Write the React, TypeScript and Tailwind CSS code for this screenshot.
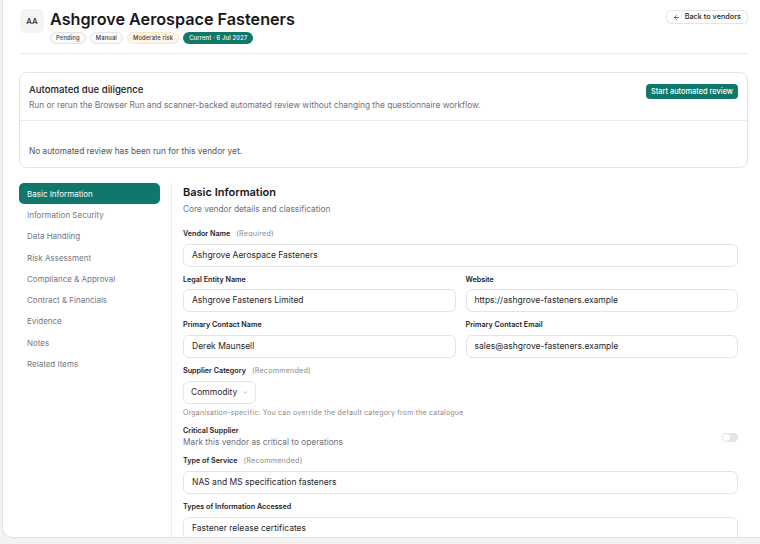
import React from "react";
import { ArrowLeft, ChevronDown } from "lucide-react";

const navItems = [
  "Basic Information",
  "Information Security",
  "Data Handling",
  "Risk Assessment",
  "Compliance & Approval",
  "Contract & Financials",
  "Evidence",
  "Notes",
  "Related Items",
];

function Label({ text, hint }: { text: string; hint?: string }) {
  return (
    <div className="h-[10px] leading-[10px] text-[7.2px] font-semibold text-[#222] flex items-center">
      <span>{text}</span>
      {hint && <span className="ml-[6px] font-normal text-[#8a8a8a] tracking-[0.2px]">{hint}</span>}
    </div>
  );
}

function Input({ value }: { value: string }) {
  return (
    <div className="mt-[4.5px] h-[23px] rounded-[6px] border border-[#e4e4e7] bg-white flex items-center px-[8px] text-[8.5px] text-[#27272a]">
      {value}
    </div>
  );
}

function Field({ label, hint, value }: { label: string; hint?: string; value: string }) {
  return (
    <div>
      <Label text={label} hint={hint} />
      <Input value={value} />
    </div>
  );
}

const badge = "h-[12px] px-[5px] rounded-full text-[5.8px] font-medium flex items-center tracking-[0.15px]";

export default function App() {
  return (
    <div className="h-[544px] w-[760px] overflow-hidden bg-[#f3f3f4] font-['Inter',sans-serif]">
      <div className="ml-[2px] h-[538px] w-[790px] overflow-hidden rounded-bl-[10px] border-l border-b border-[#e2e2e4] bg-white">
        <div className="w-[745px] pl-[16px]">
          {/* Header */}
          <div className="flex justify-between pt-[9px]">
            <div className="flex pl-[1px]">
              <div className="h-[24px] w-[24px] rounded-[6px] bg-[#f4f4f5] flex items-center justify-center text-[8px] font-medium text-[#27272a]">
                AA
              </div>
              <div className="ml-[6px]">
                <div className="h-[20px] leading-[20px] text-[16.2px] font-semibold text-[#18181b]">
                  Ashgrove Aerospace Fasteners
                </div>
                <div className="mt-[3px] flex gap-[4px]">
                  <span className={badge + " border border-[#e4e4e7] bg-[#fafafa] text-[#3f3f46]"}>Pending</span>
                  <span className={badge + " border border-[#e4e4e7] bg-[#fafafa] text-[#3f3f46]"}>Manual</span>
                  <span className={badge + " border border-[#fbe7c6] bg-[#fdf6e8] text-[#4a3b1c]"}>Moderate risk</span>
                  <span className={badge + " bg-[#10776b] text-white px-[6px]"}>Current · 6 Jul 2027</span>
                </div>
              </div>
            </div>
            <div className="mt-[1px] h-[14px] px-[6px] rounded-[5px] border border-[#e4e4e7] bg-white flex items-center gap-[5px] text-[7.3px] font-medium text-[#27272a]">
              <ArrowLeft size={7} strokeWidth={2.2} />
              <span>Back to vendors</span>
            </div>
          </div>
          <div className="mt-[9px] ml-[1px] border-t border-[#ececee]" />

          {/* Automated due diligence */}
          <div className="mt-[18px] rounded-[8px] border border-[#e4e4e7] bg-white">
            <div className="flex justify-between px-[9px] pt-[10px] pb-[9px] border-b border-[#ececee]">
              <div>
                <div className="h-[14px] leading-[14px] text-[9.6px] font-medium text-[#18181b]">
                  Automated due diligence
                </div>
                <div className="mt-[2px] h-[12px] leading-[12px] text-[8.3px] text-[#71717a]">
                  Run or rerun the Browser Run and scanner-backed automated review without changing the questionnaire workflow.
                </div>
              </div>
              <div className="mt-[1px] h-[15px] px-[5px] rounded-[4px] bg-[#10776b] flex items-center text-[7.4px] font-medium text-white">
                Start automated review
              </div>
            </div>
            <div className="px-[9px] pt-[24px] pb-[10px] h-[12px] box-content leading-[12px] text-[8.3px] text-[#52525b]">
              No automated review has been run for this vendor yet.
            </div>
          </div>

          {/* Main */}
          <div className="mt-[15px] flex">
            <div className="w-[153px] shrink-0 border-r border-[#ececee] pr-[11px] h-[400px]">
              {navItems.map((item, i) => (
                <div
                  key={item}
                  className={
                    i === 0
                      ? "h-[21.3px] rounded-[5px] bg-[#10776b] text-white px-[8px] flex items-center text-[8px]"
                      : "h-[21.3px] px-[8px] flex items-center text-[8px] text-[#767680]"
                  }
                >
                  {item}
                </div>
              ))}
            </div>
            <div className="flex-1 pl-[11px] pr-[10px] pt-[1px]">
              <div className="h-[16px] leading-[16px] text-[11px] font-semibold text-[#18181b]">
                Basic Information
              </div>
              <div className="mt-[3px] h-[12px] leading-[12px] text-[8.3px] text-[#71717a]">
                Core vendor details and classification
              </div>

              <div className="mt-[14px] flex flex-col gap-[8.2px]">
                <Field label="Vendor Name" hint="(Required)" value="Ashgrove Aerospace Fasteners" />
                <div className="grid grid-cols-2 gap-x-[10px] gap-y-[8.2px]">
                  <Field label="Legal Entity Name" value="Ashgrove Fasteners Limited" />
                  <Field label="Website" value="https://ashgrove-fasteners.example" />
                  <Field label="Primary Contact Name" value="Derek Maunsell" />
                  <Field label="Primary Contact Email" value="sales@ashgrove-fasteners.example" />
                </div>
                <div>
                  <Label text="Supplier Category" hint="(Recommended)" />
                  <div className="mt-[4.5px] h-[23px] w-[73px] rounded-[6px] border border-[#e4e4e7] bg-white flex items-center px-[7px] gap-[6px] text-[8.5px] text-[#27272a]">
                    <span>Commodity</span>
                    <ChevronDown size={7} strokeWidth={2} className="text-[#52525b]" />
                  </div>
                  <div className="mt-[4.5px] h-[10px] leading-[10px] text-[7px] tracking-[0.2px] text-[#8a8a8a]">
                    Organisation-specific: You can override the default category from the catalogue
                  </div>
                </div>
                <div className="flex items-center justify-between">
                  <div>
                    <Label text="Critical Supplier" />
                    <div className="h-[12px] leading-[12px] text-[8.3px] text-[#71717a]">
                      Mark this vendor as critical to operations
                    </div>
                  </div>
                  <div className="h-[9px] w-[16px] rounded-full bg-[#e4e4e7] p-[1px] flex items-center">
                    <div className="h-[7px] w-[7px] rounded-full bg-white" />
                  </div>
                </div>
                <Field label="Type of Service" hint="(Recommended)" value="NAS and MS specification fasteners" />
                <Field label="Types of Information Accessed" value="Fastener release certificates" />
              </div>
            </div>
          </div>
        </div>
      </div>
    </div>
  );
}
